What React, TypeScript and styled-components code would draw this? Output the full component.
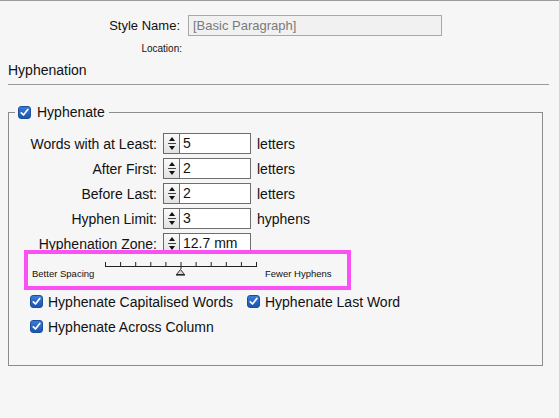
import React from "react";
import styled, { createGlobalStyle } from "styled-components";

const Global = createGlobalStyle`
  html, body { margin: 0; padding: 0; background: #f6f6f6; }
  body { font-family: "Liberation Sans", Arial, sans-serif; color: #111; }
  #root { width: 559px; height: 418px; overflow: hidden; }
`;

const Page = styled.div`
  border-top: 1px solid #9c9c9c;
  height: 417px;
  box-sizing: border-box;
`;

const NameRow = styled.div`
  display: grid;
  grid-template-columns: 180px 254px;
  column-gap: 8px;
  margin-top: 14px;
  align-items: center;
`;

const RightLabel = styled.div<{ $size?: number }>`
  text-align: right;
  font-size: ${(p) => p.$size ?? 13}px;
  line-height: 21px;
`;

const NameInput = styled.div`
  height: 21px;
  box-sizing: border-box;
  border: 1px solid #a9a9a9;
  background: #f1f1f1;
  color: #7a7a7a;
  font-size: 13px;
  line-height: 19px;
  padding-left: 4px;
`;

const LocationRow = styled.div`
  width: 182px;
  text-align: right;
  font-size: 10px;
  line-height: 12px;
  margin-top: 7px;
`;

const SectionTitle = styled.div`
  margin: 7px 0 0 8px;
  font-size: 14px;
  line-height: 16px;
`;

const Rule = styled.div`
  margin: 6px 10px 0 8px;
  border-top: 1px solid #9a9a9a;
`;

const Group = styled.fieldset`
  margin: 19px 16px 0 8px;
  padding: 13px 0 30px 0;
  border: 1px solid #8c8c8c;
  min-width: 0;
`;

const Legend = styled.legend`
  margin-left: 6px;
  padding: 0 4px 0 3px;
  display: flex;
  align-items: center;
  gap: 6px;
  font-size: 14px;
  line-height: 16px;
`;

const Rows = styled.div`
  display: flex;
  flex-direction: column;
  gap: 4px;
`;

const FieldRow = styled.div`
  display: flex;
  align-items: center;
  height: 21px;
`;

const FieldLabel = styled.div`
  width: 148px;
  margin-right: 6px;
  text-align: right;
  font-size: 14px;
  white-space: nowrap;
`;

const Stepper = styled.div`
  width: 16px;
  height: 21px;
  box-sizing: border-box;
  border: 1px solid #6a6a6a;
  border-right: none;
  background: linear-gradient(#fafafa, #e2e2e2);
  display: flex;
  align-items: center;
  justify-content: center;
`;

const Field = styled.div`
  width: 72px;
  height: 21px;
  box-sizing: border-box;
  border: 1px solid #6f6f6f;
  background: #fff;
  font-size: 14px;
  line-height: 19px;
  padding-left: 3px;
`;

const Unit = styled.div`
  margin-left: 6px;
  font-size: 14px;
`;

const SliderRow = styled.div`
  position: relative;
  height: 36px;
  box-sizing: border-box;
  padding: 6px 0 0 23px;
  display: flex;
  align-items: flex-start;
`;

const SmallLabel = styled.div<{ $w?: number; $ml?: number }>`
  font-size: 9.5px;
  line-height: 11px;
  margin-top: 8px;
  width: ${(p) => (p.$w ? `${p.$w}px` : "auto")};
  margin-left: ${(p) => p.$ml ?? 0}px;
  white-space: nowrap;
`;

const Highlight = styled.div`
  position: absolute;
  left: 15px;
  top: -4px;
  width: 327px;
  height: 40px;
  box-sizing: border-box;
  border: 4.5px solid #fa50f4;
  pointer-events: none;
`;

const CheckList = styled.div`
  display: flex;
  flex-direction: column;
  gap: 8px;
  margin-top: 3px;
  padding-left: 21px;
`;

const CheckLine = styled.div`
  display: flex;
  align-items: center;
  gap: 14px;
  height: 17px;
`;

const CheckItem = styled.label`
  display: flex;
  align-items: center;
  gap: 5px;
  font-size: 14px;
  white-space: nowrap;
`;

const Box = styled.span`
  width: 13px;
  height: 13px;
  box-sizing: border-box;
  border-radius: 3px;
  background: linear-gradient(#3a7ad6, #1b56b0);
  border: 1px solid #1a4f9e;
  display: inline-flex;
  align-items: center;
  justify-content: center;
  flex: none;
`;

const Check = () => (
  <Box>
    <svg width="9" height="9" viewBox="0 0 9 9">
      <path d="M1.3 4.8 L3.5 7 L7.8 1.5" fill="none" stroke="#fff" strokeWidth="1.7" strokeLinecap="round" strokeLinejoin="round" />
    </svg>
  </Box>
);

const Arrows = () => (
  <svg width="10" height="19" viewBox="0 0 10 19">
    <path d="M5 3 L8 7 L2 7 Z" fill="#111" />
    <line x1="1" y1="9.5" x2="9" y2="9.5" stroke="#444" strokeWidth="1" />
    <path d="M2 12 L8 12 L5 16 Z" fill="#111" />
  </svg>
);

const Ruler = () => {
  const ticks = Array.from({ length: 11 }, (_, i) => 0.5 + i * 15.1);
  return (
    <svg width="152" height="16" viewBox="0 0 152 16">
      <line x1="0.5" y1="6.5" x2="151.5" y2="6.5" stroke="#222" strokeWidth="1" />
      {ticks.map((x, i) => (
        <line key={i} x1={x} y1={i === 5 ? 2 : 2} x2={x} y2={i === 5 ? 9 : 7} stroke="#222" strokeWidth="1" />
      ))}
      <path d="M75.5 9.5 L79.5 14.5 L71.5 14.5 Z" fill="#d8d8d8" stroke="#333" strokeWidth="1" />
      <line x1="71" y1="15" x2="80" y2="15" stroke="#222" strokeWidth="1.2" />
    </svg>
  );
};

const rows = [
  { label: "Words with at Least:", value: "5", unit: "letters" },
  { label: "After First:", value: "2", unit: "letters" },
  { label: "Before Last:", value: "2", unit: "letters" },
  { label: "Hyphen Limit:", value: "3", unit: "hyphens" },
  { label: "Hyphenation Zone:", value: "12.7 mm", unit: "" },
];

export default function App() {
  return (
    <>
      <Global />
      <Page>
        <NameRow>
          <RightLabel>Style Name:</RightLabel>
          <NameInput>[Basic Paragraph]</NameInput>
        </NameRow>
        <LocationRow>Location:</LocationRow>
        <SectionTitle>Hyphenation</SectionTitle>
        <Rule />
        <Group>
          <Legend>
            <Check />
            Hyphenate
          </Legend>
          <Rows>
            {rows.map((r) => (
              <FieldRow key={r.label}>
                <FieldLabel>{r.label}</FieldLabel>
                <Stepper>
                  <Arrows />
                </Stepper>
                <Field>{r.value}</Field>
                {r.unit && <Unit>{r.unit}</Unit>}
              </FieldRow>
            ))}
          </Rows>
          <SliderRow>
            <SmallLabel $w={73}>Better Spacing</SmallLabel>
            <Ruler />
            <SmallLabel $ml={8}>Fewer Hyphens</SmallLabel>
            <Highlight />
          </SliderRow>
          <CheckList>
            <CheckLine>
              <CheckItem>
                <Check />
                Hyphenate Capitalised Words
              </CheckItem>
              <CheckItem>
                <Check />
                Hyphenate Last Word
              </CheckItem>
            </CheckLine>
            <CheckLine>
              <CheckItem>
                <Check />
                Hyphenate Across Column
              </CheckItem>
            </CheckLine>
          </CheckList>
        </Group>
      </Page>
    </>
  );
}
